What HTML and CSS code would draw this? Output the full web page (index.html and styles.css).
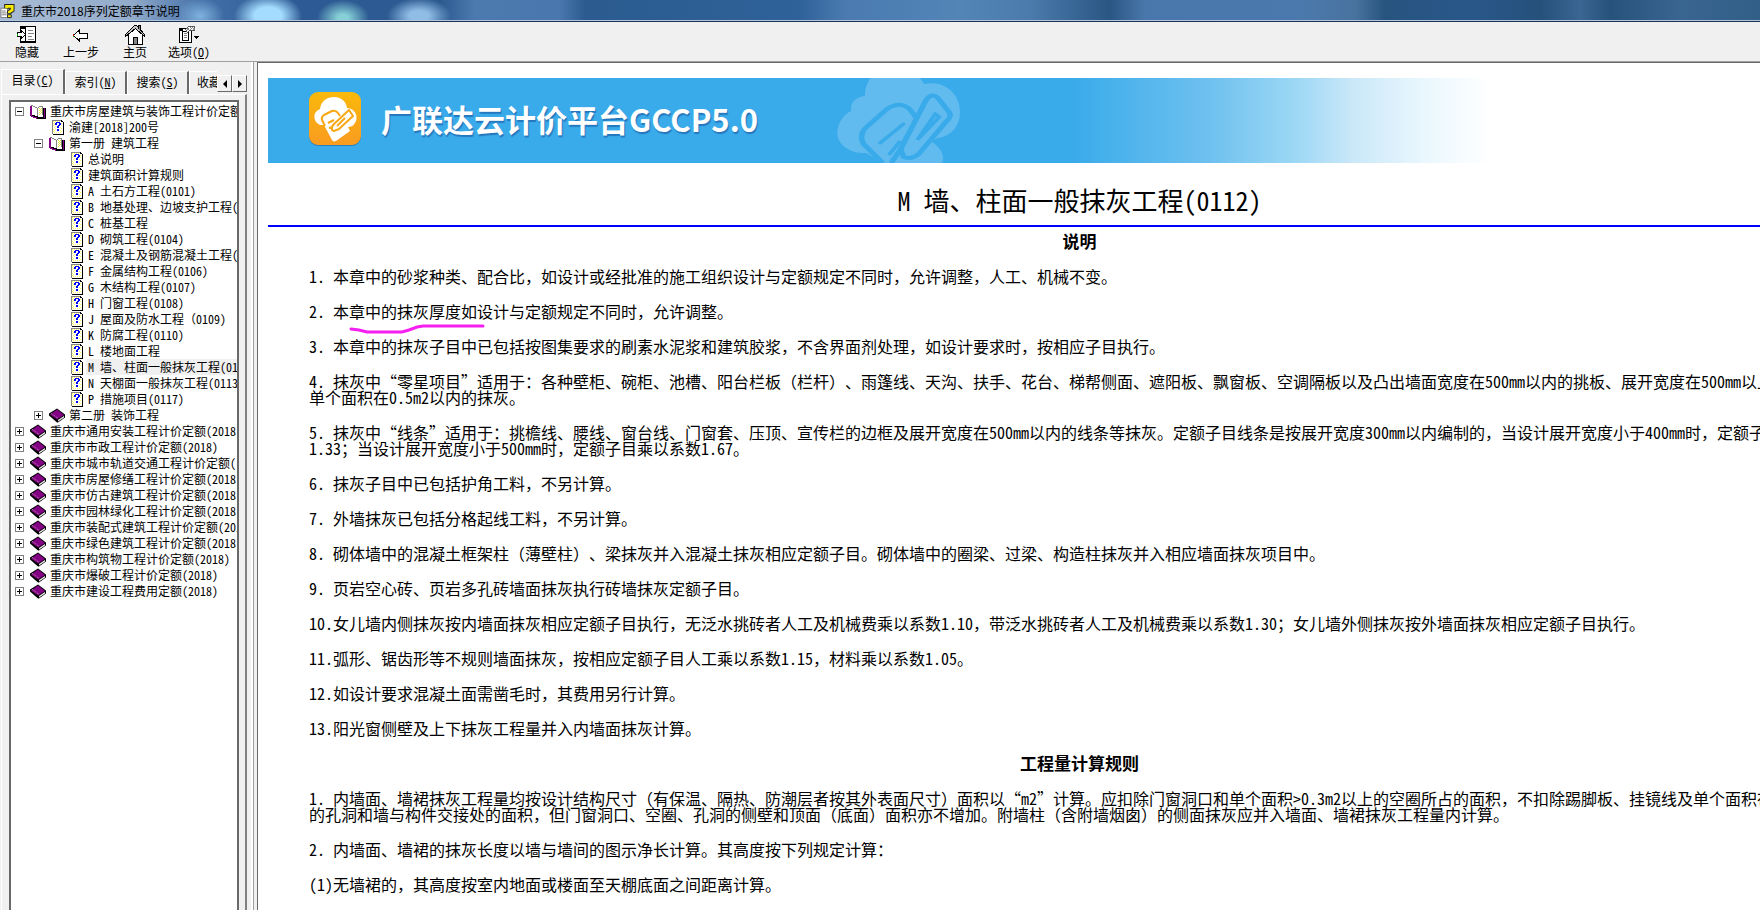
FILE: index.html
```html
<!DOCTYPE html>
<html lang="zh-CN">
<head>
<meta charset="utf-8">
<title>重庆市2018序列定额章节说明</title>
<link rel="stylesheet" href="styles.css">
</head>
<body>
<svg class="defs" aria-hidden="true">
  <symbol id="page" viewBox="-2 0 16 15" shape-rendering="crispEdges">
    <path fill="#fff" d="M0 0h10v1h1v13H0z"/>
    <path fill="#ff6" d="M1 1h1v1H1zM3 1h1v1H3zM5 1h1v1H5zM7 1h1v1H7zM2 2h1v1H2zM9 3h1v1H9zM1 3h1v1H1zM2 4h1v1H2zM1 5h1v1H1zM9 5h1v1H9zM3 6h1v1H3zM2 7h1v1H2zM8 7h1v1H8zM9 8h1v1H9zM3 8h1v1H3zM1 9h1v1H1zM2 10h1v1H2zM8 10h1v1H8zM9 11h1v1H9zM1 11h1v1H1zM2 12h1v1H2zM4 12h1v1H4zM6 12h1v1H6zM8 12h1v1H8z"/>
    <path fill="#848484" d="M0 0h9v1H1v13H0z"/>
    <path fill="#000" d="M9 0h1v1h1v1h1v13H1v-1h10V2H9z"/>
    <path fill="#00f" d="M4 2h4v1H4zM3 3h2v2H3zM7 3h2v2H7zM6 5h2v1H6zM5 6h2v2H5zM5 9h2v2H5z"/>
  </symbol>
  <symbol id="book" viewBox="0 0 16 14">
    <path fill="#000" d="M8 0l8 6v3l-7 5H8L0 7V5z"/>
    <path fill="#840084" d="M8 1l7 5.500-7 4.500-7-5z"/>
    <path fill="#fff" d="M9 11.500l6-4v1.500l-6 4z"/>
    <path fill="none" stroke="#c6c6c6" stroke-width=".8" stroke-dasharray="1 1" d="M2 4.800l7 5M9 12.500l6-4"/>
  </symbol>
  <symbol id="open" viewBox="0 0 16 14" shape-rendering="crispEdges">
    <path fill="#840084" d="M0 1h2v9h3v1h3v1h6v1h1v1H6v-1H3v-1H1v-1H0z"/>
    <path fill="#840084" d="M13 3h2v10h-2z"/>
    <path fill="#000" d="M15 3h1v11H7v-1h8zM2 10h3v1h3v1h5V3h1v10H7v-1H4v-1H2z"/>
    <path fill="#fff" d="M2 0h2v1h2v1h1v9H5v-1H2z"/>
    <path fill="#848484" d="M1 0h2v1H1zM3 1h2v1H3zM5 2h2v1H5zM7 3h1v8H7zM8 2h1v1H8zM9 1h4v1H9zM12 2h1v8h-1z"/>
    <path fill="#fff" d="M8 3h1V2h3v8H9v1H8z"/>
    <path fill="#e8e840" d="M9 3h1v1H9zM11 3h1v1h-1zM10 4h1v1h-1zM9 5h1v1H9zM11 5h1v1h-1zM10 6h1v1h-1zM9 7h1v1H9zM11 7h1v1h-1zM10 8h1v1h-1zM9 9h1v1H9z"/>
  </symbol>
</svg>
<div class="app">
  <header class="titlebar">
    <svg class="app-icon" viewBox="0 0 16 16" aria-hidden="true"><path fill="#fff" stroke="#777" d="M1 5h7v10H1z"/><path stroke="#777" d="M2 8h4M2 10h5M2 12h5"/><path fill="none" stroke="#222" stroke-width="5" d="M7 5V3h6v4l-3 2v2"/><path fill="none" stroke="#f6ea00" stroke-width="3" d="M7 5V3h6v4l-3 2v1"/><path fill="#f6ea00" stroke="#222" d="M8 12h4v3H8z"/></svg>
    <h1>重庆市2018序列定额章节说明</h1>
  </header>
  <nav class="toolbar" aria-label="工具栏">
    <button class="tool"><svg width="20" height="18" viewBox="0 0 20 18" shape-rendering="crispEdges"><path fill="#fff" stroke="#000" d="M3.500.5h15v16h-15z"/><path fill="#000" d="M3 1h6v2H3zM8 0h1v17H8zM18 1h1v16h-1zM3 15h16v2H3z"/><path stroke="#848484" d="M11 4.500h5M11 7.500h6M11 10.500h4M11 13.500h6"/><path fill="#fff" stroke="#000" d="M.5 6.500h4v-2l4 4-4 4v-2h-4z"/><path fill="#00c000" d="M0 8h1v2H0z"/></svg><span>隐藏</span></button>
    <button class="tool"><svg width="20" height="18" viewBox="0 0 20 18" shape-rendering="crispEdges"><path fill="#fff" stroke="#000" d="M2.500 9.500l6-5.500v3h8v5h-8v3z"/><path fill="#c00" d="M2 8h1v2H2z"/><path fill="#00c000" d="M2 10h1v1H2z"/></svg><span>上一步</span></button>
    <button class="tool"><svg width="20" height="20" viewBox="0 0 20 20" shape-rendering="crispEdges"><path fill="#fff" stroke="#000" d="M3.500 9v10.500h14V9l-7-7z"/><path fill="#c6c6c6" stroke="#000" d="M.5 11.500v-2l9-9h2l8 9v2l-9-8z"/><path fill="#848484" stroke="#000" d="M8.500 19v-7h4v7M13.500 4V.5h2V6"/></svg><span>主页</span></button>
    <button class="tool"><svg width="20" height="18" viewBox="0 0 20 18" shape-rendering="crispEdges"><path fill="#fff" stroke="#000" d="M.5 2.500h12v14H.5z"/><path fill="#000" d="M0 2h4v3H0zM12 4h1v13h-1zM0 16h13v1H0z"/><path fill="#fff" stroke="#000" d="M3.500 5.500h6v9h-6z"/><path stroke="#848484" d="M5 7.500h3M5 9.500h3M5 11.500h3"/><path fill="#fff" stroke="#555" d="M6.500 3.500l3-3h6v4h-5l-2 2z"/><path fill="#848484" d="M8 2h2v2H8zM11 1h1v1h-1zM13 1h1v1h-1zM12 2h1v1h-1zM14 2h2v2h-2zM11 3h1v1h-1z"/><path fill="#000" d="M15 10h5v1h-1v1h-1v1h-1v-1h-1v-1h-1z"/></svg><span>选项(<u>O</u>)</span></button>
  </nav>
  <div class="body">
    <aside class="sidebar">
      <div class="tabs" role="tablist">
        <button class="tab active" role="tab" aria-selected="true">目录(<u>C</u>)</button>
        <button class="tab" role="tab">索引(<u>N</u>)</button>
        <button class="tab" role="tab">搜索(<u>S</u>)</button>
        <button class="tab clipped" role="tab">收藏夹</button>
        <button class="scroll" aria-label="向左"><i class="left"></i></button>
        <button class="scroll" aria-label="向右"><i class="right"></i></button>
      </div>
      <div class="panel">
        <ul class="tree" id="tree"></ul>
      </div>
    </aside>
    <main class="content">
      <div class="banner">
        <svg class="logo" viewBox="0 0 54 56" aria-hidden="true">
          <defs><linearGradient id="orange" x1="0" y1="0" x2="0" y2="1"><stop offset="0" stop-color="#f9b90b"/><stop offset="1" stop-color="#f99b20"/></linearGradient></defs>
          <rect x="1" y="2" width="52" height="53" rx="9" fill="#2f7fbd"/>
          <rect x="1" y="1" width="52" height="53" rx="9" fill="url(#orange)"/>
          <path fill="#fff" d="M12 34c-7-3-8-13 0-16C13 10 19 6 26 6s12 4 13 11c8 0 12 9 8 15-2 3-4 4-7 4l2 4-14 10c-2 1-3 0-4-1l-8-15z"/>
          <path fill="#fff" stroke="#f8a817" stroke-width="2" stroke-linejoin="round" d="M24 39q-1-3 2-6l15-14 4 6-14 13-5 2zM17 35l-3-6q-1-3 2-5l8-4q4-1 6 2l2 3M20 32l6-3M21 37l4-1M29 35l8-8"/>
        </svg>
        <strong>广联达云计价平台GCCP5.0</strong>
        <svg class="mark" viewBox="0 0 90 85" preserveAspectRatio="none" aria-hidden="true">
          <path fill="#61bbee" d="M22 75C8 76 0 64 1 53c1-10 5-17 10-20-1-9 4-14 10-15 0-8 2-14 4-18h36l3 6c15-4 26 10 26 28 0 14-6 24-16 26l-5 3c8 8 10 15 8 22H35z"/>
          <path fill="#61bbee" stroke="#3aabea" stroke-width="4" stroke-linejoin="round" d="M34 85L20 66q-4-10 3-18l14-17q10-9 17 1l5 9-13 32-6 12"/>
          <path fill="#61bbee" stroke="#3aabea" stroke-width="4" stroke-linejoin="round" d="M47 71l18-48q4-9 9-3l8 14q2 4-1 8L60 76q-5 6-11 3z"/>
          <path fill="none" stroke="#3aabea" stroke-width="3" stroke-linecap="round" d="M32 65l17-19M59 62l13-26 3 3zM39 76l7-12"/>
        </svg>
      </div>
      <div class="sheet">
        <h2>M 墙、柱面一般抹灰工程(0112)</h2>
        <hr>
        <article class="text">
          <h3>说明</h3>
          <p>1. 本章中的砂浆种类、配合比，如设计或经批准的施工组织设计与定额规定不同时，允许调整，人工、机械不变。</p>
          <p>2. 本<span class="marked">章中的抹灰厚度如<svg viewBox="0 0 136 12" aria-hidden="true"><path d="M2 5l8 1 8 2h35l7-2 8-3 6-1h60"/></svg></span>设计与定额规定不同时，允许调整。</p>
          <p>3. 本章中的抹灰子目中已包括按图集要求的刷素水泥浆和建筑胶浆，不含界面剂处理，如设计要求时，按相应子目执行。</p>
          <p>4. 抹灰中<q>零星项目</q>适用于：各种壁柜、碗柜、池槽、阳台栏板（栏杆）、雨篷线、天沟、扶手、花台、梯帮侧面、遮阳板、飘窗板、空调隔板以及凸出墙面宽度在500mm以内的挑板、展开宽度在500mm以上<br>单个面积在0.5m2以内的抹灰。</p>
          <p>5. 抹灰中<q>线条</q>适用于：挑檐线、腰线、窗台线、门窗套、压顶、宣传栏的边框及展开宽度在500mm以内的线条等抹灰。定额子目线条是按展开宽度300mm以内编制的，当设计展开宽度小于400mm时，定额子目<br>1.33；当设计展开宽度小于500mm时，定额子目乘以系数1.67。</p>
          <p>6. 抹灰子目中已包括护角工料，不另计算。</p>
          <p>7. 外墙抹灰已包括分格起线工料，不另计算。</p>
          <p>8. 砌体墙中的混凝土框架柱（薄壁柱）、梁抹灰并入混凝土抹灰相应定额子目。砌体墙中的圈梁、过梁、构造柱抹灰并入相应墙面抹灰项目中。</p>
          <p>9. 页岩空心砖、页岩多孔砖墙面抹灰执行砖墙抹灰定额子目。</p>
          <p>10.女儿墙内侧抹灰按内墙面抹灰相应定额子目执行，无泛水挑砖者人工及机械费乘以系数1.10，带泛水挑砖者人工及机械费乘以系数1.30；女儿墙外侧抹灰按外墙面抹灰相应定额子目执行。</p>
          <p>11.弧形、锯齿形等不规则墙面抹灰，按相应定额子目人工乘以系数1.15，材料乘以系数1.05。</p>
          <p>12.如设计要求混凝土面需凿毛时，其费用另行计算。</p>
          <p>13.阳光窗侧壁及上下抹灰工程量并入内墙面抹灰计算。</p>
          <h3>工程量计算规则</h3>
          <p>1. 内墙面、墙裙抹灰工程量均按设计结构尺寸（有保温、隔热、防潮层者按其外表面尺寸）面积以<q>m2</q>计算。应扣除门窗洞口和单个面积&gt;0.3m2以上的空圈所占的面积，不扣除踢脚板、挂镜线及单个面积在<br>的孔洞和墙与构件交接处的面积，但门窗洞口、空圈、孔洞的侧壁和顶面（底面）面积亦不增加。附墙柱（含附墙烟囱）的侧面抹灰应并入墙面、墙裙抹灰工程量内计算。</p>
          <p>2. 内墙面、墙裙的抹灰长度以墙与墙间的图示净长计算。其高度按下列规定计算：</p>
          <p>(1)无墙裙的，其高度按室内地面或楼面至天棚底面之间距离计算。</p>
        </article>
      </div>
    </main>
  </div>
</div>
<script src="tree.js"></script>
</body>
</html>
```
FILE: tree.js
```js
// Each entry: [indent level, icon, label, selected]
const items = [
  [0, "open", "重庆市房屋建筑与装饰工程计价定额"],
  [1, "page", "渝建[2018]200号"],
  [1, "open", "第一册 建筑工程"],
  [2, "page", "总说明"],
  [2, "page", "建筑面积计算规则"],
  [2, "page", "A 土石方工程(0101)"],
  [2, "page", "B 地基处理、边坡支护工程("],
  [2, "page", "C 桩基工程"],
  [2, "page", "D 砌筑工程(0104)"],
  [2, "page", "E 混凝土及钢筋混凝土工程("],
  [2, "page", "F 金属结构工程(0106)"],
  [2, "page", "G 木结构工程(0107)"],
  [2, "page", "H 门窗工程(0108)"],
  [2, "page", "J 屋面及防水工程（0109)"],
  [2, "page", "K 防腐工程(0110)"],
  [2, "page", "L 楼地面工程"],
  [2, "page", "M 墙、柱面一般抹灰工程(0112)", true],
  [2, "page", "N 天棚面一般抹灰工程(0113)"],
  [2, "page", "P 措施项目(0117)"],
  [1, "book", "第二册 装饰工程"],
  [0, "book", "重庆市通用安装工程计价定额(2018)"],
  [0, "book", "重庆市市政工程计价定额(2018)"],
  [0, "book", "重庆市城市轨道交通工程计价定额("],
  [0, "book", "重庆市房屋修缮工程计价定额(2018)"],
  [0, "book", "重庆市仿古建筑工程计价定额(2018)"],
  [0, "book", "重庆市园林绿化工程计价定额(2018)"],
  [0, "book", "重庆市装配式建筑工程计价定额(2018)"],
  [0, "book", "重庆市绿色建筑工程计价定额(2018)"],
  [0, "book", "重庆市构筑物工程计价定额(2018)"],
  [0, "book", "重庆市爆破工程计价定额(2018)"],
  [0, "book", "重庆市建设工程费用定额(2018)"]
];
document.getElementById("tree").innerHTML = items.map(([level, icon, label, selected]) => {
  const toggle = icon === "page"
    ? '<span class="toggle-space"></span>'
    : `<button class="toggle ${icon}" aria-label="${icon === "open" ? "折叠" : "展开"}"></button>`;
  return `<li class="level-${level}">${toggle}<svg class="node ${icon}"><use href="#${icon}"/></svg><span class="label${selected ? " selected" : ""}">${label}</span></li>`;
}).join("");
```
FILE: styles.css
```css
* { box-sizing: border-box; }
body {
  margin: 0;
  height: 100vh;
  overflow: hidden;
  background: #f0f0f0;
  color: #000;
  font: 12px/16px "Noto Sans Mono CJK SC", "Noto Sans CJK SC", sans-serif;
  text-spacing-trim: space-all;
}
button { font: inherit; color: inherit; border: 0; padding: 0; background: none; }
.defs { display: none; }
.app { display: flex; flex-direction: column; height: 100%; }

.titlebar {
  flex: none;
  display: flex;
  align-items: center;
  gap: 6px;
  height: 22px;
  border-bottom: 1px solid #1c3358;
  box-shadow: inset 0 -1px #b4c6dc;
  background:
    radial-gradient(ellipse 34px 22px at 268px 16px, #a4dcff 40%, transparent),
    radial-gradient(ellipse 26px 18px at 343px 18px, #86cfd6 20%, transparent),
    radial-gradient(ellipse 32px 18px at 419px 16px, #90bde6 30%, transparent),
    radial-gradient(ellipse 24px 18px at 200px 16px, #7fb2df, transparent),
    linear-gradient(90deg, #a9bcd5 0, #93accb 130px, #4470a8 200px, #2d5a94 300px, #2c5a90 440px, #4c79ae 475px, #4a78ae 560px, #2b5b8f 585px, #2f6299 800px, #4a7ab0 845px, #5385b7 960px, #4b7bac 1030px, #2a5683 1110px, #4a77ab 1145px, #4c79ad 1300px, #48739f 1355px, #27547f 1385px, #295789 1470px, #25517b 1540px, #3b6592 1580px, #26527b 1610px, #396591 1680px, #315f87 100%);
}
.app-icon { width: 15px; height: 16px; }
.titlebar h1 { margin: 0; font: 12px/18px "Noto Sans CJK SC", sans-serif; }

.toolbar { flex: none; display: flex; height: 40px; padding-top: 3px; border-bottom: 1px solid #a0a0a0; }
.tool { width: 54px; display: flex; flex-direction: column; align-items: center; justify-content: flex-start; }
.tool svg { height: 20px; }
.tool span { line-height: 14px; }

.body { flex: 1; display: flex; min-height: 0; }
.sidebar { flex: none; width: 254px; display: flex; flex-direction: column; padding: 7px 6px 0 1px; border-right: 1px solid #a0a0a0; box-shadow: inset -2px 0 #fff; }
.tabs { display: flex; align-items: flex-end; height: 25px; }
.tab { flex: none; width: 62px; height: 23px; line-height: 18px; padding-bottom: 2px; border-top: 1px solid #fff; border-left: 1px solid #fff; border-right: 2px solid #696969; }
.tab.active { width: 64px; height: 25px; padding-bottom: 4px; }
.tab.clipped { flex: 1; width: 0; min-width: 0; padding-left: 7px; overflow: hidden; white-space: nowrap; border-right: 0; text-align: left; }
.scroll { flex: none; width: 15px; height: 17px; margin-bottom: 2px; display: grid; place-items: center; border: 1px solid; border-color: #fff #696969 #696969 #fff; }
.scroll i { border: 4px solid transparent; }
.scroll .left { border-right-color: #000; border-left-width: 0; }
.scroll .right { border-left-color: #000; border-right-width: 0; }
.panel { flex: 1; min-height: 0; padding: 5px 6px 0 7px; border-right: 2px solid #808080; border-left: 1px solid #fff; border-top: 1px solid #fff; }
.tree { height: 100%; margin: 0; padding: 1px 0 0 4px; list-style: none; overflow: hidden; background: #fff; border: 2px solid #696969; border-bottom: 0; }
.tree li { display: flex; align-items: center; height: 16px; white-space: nowrap; }
.tree .level-1 { padding-left: 19px; }
.tree .level-2 { padding-left: 38px; }
.toggle { flex: none; width: 9px; height: 9px; margin-right: 6px; border: 1px solid #808080; background: linear-gradient(#000, #000) center / 5px 1px no-repeat; }
.toggle.book { background: linear-gradient(#000, #000) center / 5px 1px no-repeat, linear-gradient(#000, #000) center / 1px 5px no-repeat; }
.toggle-space { flex: none; width: 16px; }
.node { flex: none; width: 16px; height: 15px; margin-right: 2px; }
.node.page { margin-right: 1px; }
.label { padding: 0 2px; }
.label.selected { background: #f0f0f0; }

.content { flex: 1; min-width: 0; margin-left: 3px; padding: 15px 0 0 10px; overflow: hidden; background: #fff; border-left: 1px solid #696969; border-top: 1px solid #696969; }
.banner {
  display: flex;
  align-items: center;
  height: 85px;
  padding: 0 0 3px 40px;
  background: linear-gradient(90deg, #3aabea 806px, #6fc1ef 943px, #9bd7f5 1026px, #cbe8f8 1086px, #e9f7fe 1155px, #fff 1222px);
}
.logo { flex: none; width: 54px; height: 56px; margin-right: 19px; }
.banner strong { flex: none; width: 455px; color: #fff; font: 700 31px/40px "Noto Sans CJK SC", sans-serif; text-shadow: 1px 2px 1px #2577bd; white-space: nowrap; }
.mark { flex: none; align-self: flex-start; width: 124px; height: 85px; }

/* The page is wider than the window, so its centre lies to the right */
.sheet { margin-right: -131px; }
.sheet h2 { margin: 24px 0 12px; font: 500 26px/26px "Noto Sans Mono CJK SC", "Noto Sans CJK SC", sans-serif; text-align: center; }
.sheet hr { margin: 0; border: 0; height: 2px; background: #00f; }
.text { padding: 0 0 0 41px; font-size: 16px; line-height: 16px; white-space: nowrap; }
.text h3 { margin: 6px 0 19px -41px; font-size: 17px; line-height: 16px; text-align: center; }
.text p { margin: 0 0 19px; }
.text p + h3 { margin-top: 19px; }
.text q { quotes: none; }
.text q::before { content: "“"; }
.text q::after { content: "”"; }
.marked { position: relative; }
.marked svg { position: absolute; left: 0; top: 25px; width: 136px; height: 12px; fill: none; stroke: #f41ff0; stroke-width: 3; stroke-linecap: round; }
```
